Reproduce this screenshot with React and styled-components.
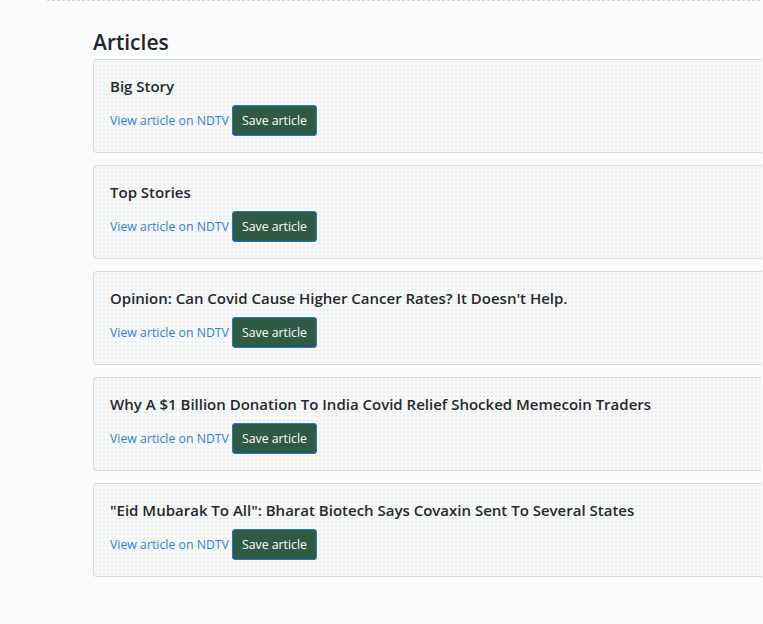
import React from "react";
import styled, { createGlobalStyle } from "styled-components";

const articles = [
  "Big Story",
  "Top Stories",
  "Opinion: Can Covid Cause Higher Cancer Rates? It Doesn't Help.",
  "Why A $1 Billion Donation To India Covid Relief Shocked Memecoin Traders",
  "\"Eid Mubarak To All\": Bharat Biotech Says Covaxin Sent To Several States",
];

const GlobalStyle = createGlobalStyle`
  html, body {
    margin: 0;
    background: #f9fbfb;
    font-family: "Open Sans", "Noto Sans", sans-serif;
    color: #212529;
  }
`;

const Page = styled.div`
  padding-left: 47px;
  width: 763px;
  height: 624px;
  box-sizing: border-box;
  overflow: hidden;
`;

const TopRule = styled.div`
  width: 713px;
  border-bottom: 1px dashed #d4d8d8;
`;

const Main = styled.main`
  padding-left: 46px;
  padding-top: 27px;
`;

const Heading = styled.h3`
  margin: 0 0 2px;
  font-size: 21px;
  font-weight: 600;
  line-height: 29px;
  color: #212529;
`;

const List = styled.div`
  display: flex;
  flex-direction: column;
  gap: 12px;
`;

const Card = styled.article`
  width: 669px;
  box-sizing: border-box;
  padding: 16px;
  border: 1px solid #d9dcdc;
  border-right: none;
  border-radius: 4px 0 0 4px;
  background-color: #f8f9f9;
  background-image: radial-gradient(#dadede 0.6px, transparent 0.8px);
  background-size: 4px 4px;
`;

const Title = styled.h5`
  margin: 1px 0 9px;
  font-size: 15px;
  font-weight: 600;
  line-height: 19px;
  color: #25292d;
  white-space: nowrap;
`;

const Actions = styled.div`
  display: flex;
  align-items: center;
  gap: 3px;
`;

const Link = styled.a`
  font-size: 12.3px;
  color: #2f7fd4;
  text-decoration: none;
`;

const SaveButton = styled.button`
  height: 31px;
  padding: 2px 9px 0;
  border: 1px solid #2576d2;
  border-radius: 3px;
  background: #2f5a44;
  color: #ffffff;
  font-family: inherit;
  font-size: 12.3px;
  line-height: 1;
`;

export default function App() {
  return (
    <Page>
      <GlobalStyle />
      <TopRule />
      <Main>
        <Heading>Articles</Heading>
        <List>
          {articles.map((title) => (
            <Card key={title}>
              <Title>{title}</Title>
              <Actions>
                <Link href="#">View article on NDTV</Link>
                <SaveButton>Save article</SaveButton>
              </Actions>
            </Card>
          ))}
        </List>
      </Main>
    </Page>
  );
}
